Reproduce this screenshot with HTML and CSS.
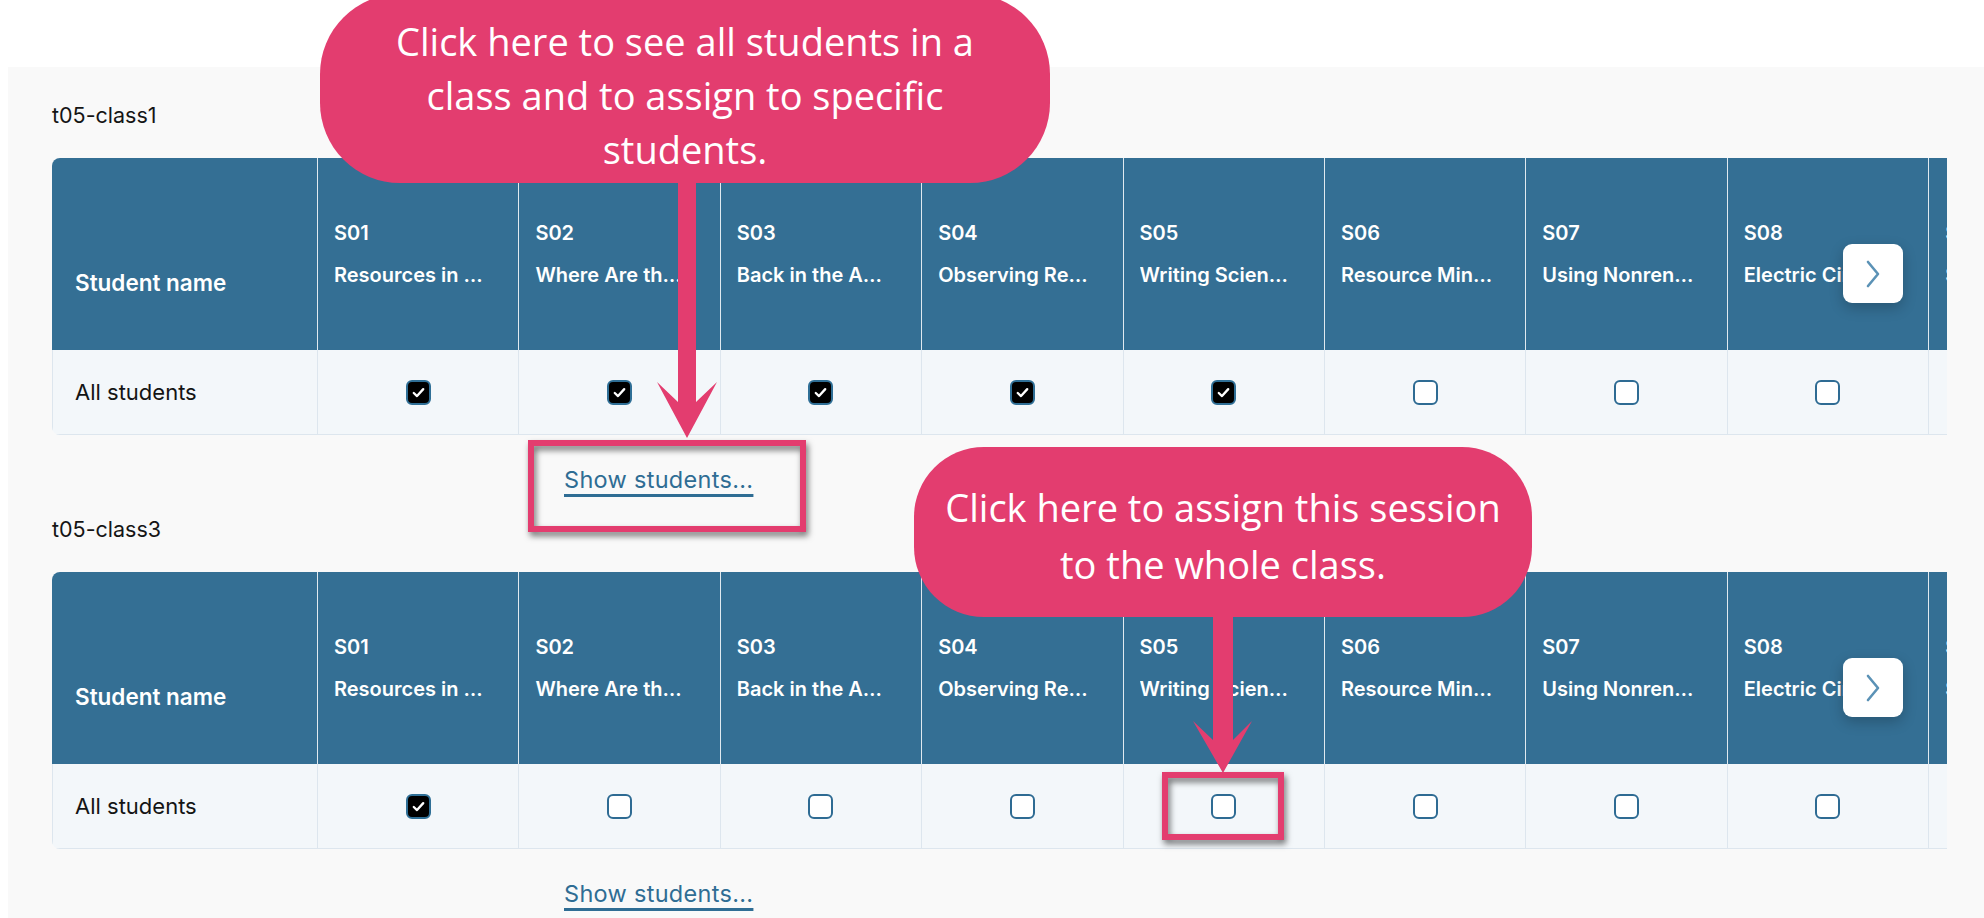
FILE: index.html
```html
<!DOCTYPE html>
<html lang="en">
<head>
<meta charset="utf-8">
<title>Assign sessions</title>
<link rel="stylesheet" href="styles.css">
</head>
<body>
<div class="top"></div>
<main class="panel">
  <section class="klass">
    <div class="klass-name">t05-class1</div>
    <div class="grid-wrap">
      <div class="grid">
        <div class="th th-name">Student name</div>
        <div class="th"><span class="code">S01</span><span class="title">Resources in …</span></div>
        <div class="th"><span class="code">S02</span><span class="title">Where Are th…</span></div>
        <div class="th"><span class="code">S03</span><span class="title">Back in the A…</span></div>
        <div class="th"><span class="code">S04</span><span class="title">Observing Re…</span></div>
        <div class="th"><span class="code">S05</span><span class="title">Writing Scien…</span></div>
        <div class="th"><span class="code">S06</span><span class="title">Resource Min…</span></div>
        <div class="th"><span class="code">S07</span><span class="title">Using Nonren…</span></div>
        <div class="th"><span class="code">S08</span><span class="title">Electric Circ…</span></div>
        <div class="th"><span class="code">S09</span><span class="title">Saving Energ…</span></div>
        <div class="td td-name">All students</div>
        <div class="td"><span class="cb on"><svg viewBox="0 0 20 20"><polyline points="5.5,10.5 8.6,13.4 14.5,6.8"/></svg></span></div>
        <div class="td"><span class="cb on"><svg viewBox="0 0 20 20"><polyline points="5.5,10.5 8.6,13.4 14.5,6.8"/></svg></span></div>
        <div class="td"><span class="cb on"><svg viewBox="0 0 20 20"><polyline points="5.5,10.5 8.6,13.4 14.5,6.8"/></svg></span></div>
        <div class="td"><span class="cb on"><svg viewBox="0 0 20 20"><polyline points="5.5,10.5 8.6,13.4 14.5,6.8"/></svg></span></div>
        <div class="td"><span class="cb on"><svg viewBox="0 0 20 20"><polyline points="5.5,10.5 8.6,13.4 14.5,6.8"/></svg></span></div>
        <div class="td"><span class="cb"></span></div>
        <div class="td"><span class="cb"></span></div>
        <div class="td"><span class="cb"></span></div>
        <div class="td"><span class="cb"></span></div>
      </div>
      <button class="next" type="button" aria-label="Next sessions"><svg viewBox="0 0 16 28"><polyline points="3,2 13,14 3,26"/></svg></button>
    </div>
    <div class="show"><a class="show-link" href="#">Show students...</a></div>
  </section>

  <section class="klass">
    <div class="klass-name">t05-class3</div>
    <div class="grid-wrap">
      <div class="grid">
        <div class="th th-name">Student name</div>
        <div class="th"><span class="code">S01</span><span class="title">Resources in …</span></div>
        <div class="th"><span class="code">S02</span><span class="title">Where Are th…</span></div>
        <div class="th"><span class="code">S03</span><span class="title">Back in the A…</span></div>
        <div class="th"><span class="code">S04</span><span class="title">Observing Re…</span></div>
        <div class="th"><span class="code">S05</span><span class="title">Writing Scien…</span></div>
        <div class="th"><span class="code">S06</span><span class="title">Resource Min…</span></div>
        <div class="th"><span class="code">S07</span><span class="title">Using Nonren…</span></div>
        <div class="th"><span class="code">S08</span><span class="title">Electric Circ…</span></div>
        <div class="th"><span class="code">S09</span><span class="title">Saving Energ…</span></div>
        <div class="td td-name">All students</div>
        <div class="td"><span class="cb on"><svg viewBox="0 0 20 20"><polyline points="5.5,10.5 8.6,13.4 14.5,6.8"/></svg></span></div>
        <div class="td"><span class="cb"></span></div>
        <div class="td"><span class="cb"></span></div>
        <div class="td"><span class="cb"></span></div>
        <div class="td"><span class="cb"></span></div>
        <div class="td"><span class="cb"></span></div>
        <div class="td"><span class="cb"></span></div>
        <div class="td"><span class="cb"></span></div>
        <div class="td"><span class="cb"></span></div>
      </div>
      <button class="next" type="button" aria-label="Next sessions"><svg viewBox="0 0 16 28"><polyline points="3,2 13,14 3,26"/></svg></button>
    </div>
    <div class="show"><a class="show-link" href="#">Show students...</a></div>
  </section>
</main>

<div class="notes">
  <div class="bubble bubble-1">Click here to see all students in a<br>class and to assign to specific<br>students.</div>
  <div class="bubble bubble-2">Click here to assign this session<br>to the whole class.</div>
  <svg class="arrows" viewBox="0 0 1984 918">
    <polygon points="678,180 678,402 657,382 687,438 717,382 696,402 696,180"/>
    <polygon points="1213,612 1213,740 1193,721 1223,773 1252,721 1233,740 1233,612"/>
  </svg>
  <div class="mark mark-1"></div>
  <div class="mark mark-2"></div>
</div>
</body>
</html>
```

FILE: styles.css
```css
* { box-sizing: border-box; }

html, body { margin: 0; padding: 0; }

body {
  position: relative;
  width: 1984px;
  height: 918px;
  overflow: hidden;
  background: #ffffff;
  color: #141414;
  font-family: Inter, "Open Sans", "Liberation Sans", sans-serif;
}

.top { height: 67px; }

.panel {
  margin-left: 8px;
  height: 851px;
  background: #f9f9f9;
  padding: 34px 37px 0 44px;
}

.klass-name {
  height: 28px;
  font-size: 21.5px;
  line-height: 28px;
  color: #151515;
}

.grid-wrap {
  position: relative;
  margin-top: 29px;
  border-radius: 8px 0 0 8px;
  overflow: hidden;
}

.grid {
  display: grid;
  grid-template-columns: 265px repeat(9, 201.4px);
  grid-template-rows: 192px 85px;
  width: max-content;
}

.th {
  display: flex;
  flex-direction: column;
  justify-content: center;
  padding: 0 16px;
  background: #346f94;
  color: #ffffff;
  font-size: 20px;
  font-weight: 600;
  border-left: 1px solid rgba(255, 255, 255, 0.85);
}

.th-name {
  border-left: 0;
  padding: 56px 0 0 23px;
  font-size: 22.5px;
}

.code {
  line-height: 24px;
  margin-bottom: 18px;
}

.title {
  line-height: 24px;
  white-space: nowrap;
  overflow: hidden;
  text-overflow: ellipsis;
}

.td {
  display: flex;
  align-items: center;
  justify-content: center;
  background: #f3f7fa;
  border-left: 1px solid #dde6ee;
  border-bottom: 1px solid #dde6ee;
}

.td-name {
  justify-content: flex-start;
  padding-left: 22px;
  font-size: 22px;
  color: #141414;
}

.cb {
  display: flex;
  align-items: center;
  justify-content: center;
  width: 25px;
  height: 25px;
  border: 2px solid #2e6b93;
  border-radius: 6px;
  background: #ffffff;
}

.cb.on { background: #000000; border-color: #2f6f96; }

.cb svg { width: 21px; height: 21px; }

.cb polyline {
  fill: none;
  stroke: #ffffff;
  stroke-width: 2.2;
  stroke-linecap: round;
  stroke-linejoin: round;
}

.next {
  position: absolute;
  top: 86px;
  right: 44px;
  width: 60px;
  height: 59px;
  padding: 0;
  border: 0;
  border-radius: 9px;
  background: #ffffff;
  box-shadow: 0 5px 14px rgba(0, 0, 0, 0.22);
  display: flex;
  align-items: center;
  justify-content: center;
}

.next svg { width: 16px; height: 28px; }

.next polyline {
  fill: none;
  stroke: #5b92b6;
  stroke-width: 2.6;
  stroke-linecap: round;
  stroke-linejoin: round;
}

.show {
  height: 80px;
  padding: 30px 0 0 512px;
}

.show-link {
  font-size: 23.5px;
  line-height: 30px;
  letter-spacing: 0.3px;
  color: #2f6d94;
  text-decoration: underline;
  text-decoration-thickness: 3px;
  text-underline-offset: 6px;
}

/* annotation overlay */
.notes {
  position: absolute;
  inset: 0;
  pointer-events: none;
}

.bubble {
  position: absolute;
  background: #e33d6f;
  color: #ffffff;
  text-align: center;
  white-space: nowrap;
  font-family: "Open Sans", "DejaVu Sans", sans-serif;
  font-weight: 400;
  font-size: 38px;
}

.bubble-1 {
  left: 320px;
  top: -6px;
  width: 730px;
  height: 189px;
  border-radius: 80px;
  padding-top: 20px;
  line-height: 54px;
}

.bubble-2 {
  left: 914px;
  top: 447px;
  width: 618px;
  height: 170px;
  border-radius: 70px;
  padding-top: 32px;
  line-height: 57px;
}

.arrows {
  position: absolute;
  left: 0;
  top: 0;
  width: 1984px;
  height: 918px;
}

.arrows polygon { fill: #e33d6f; }

.mark {
  position: absolute;
  border: 6px solid #e33d6f;
  filter: drop-shadow(2px 4px 3px rgba(0, 0, 0, 0.55));
}

.mark-1 { left: 528px; top: 440px; width: 278px; height: 92px; }
.mark-2 { left: 1162px; top: 772px; width: 122px; height: 68px; }
```
